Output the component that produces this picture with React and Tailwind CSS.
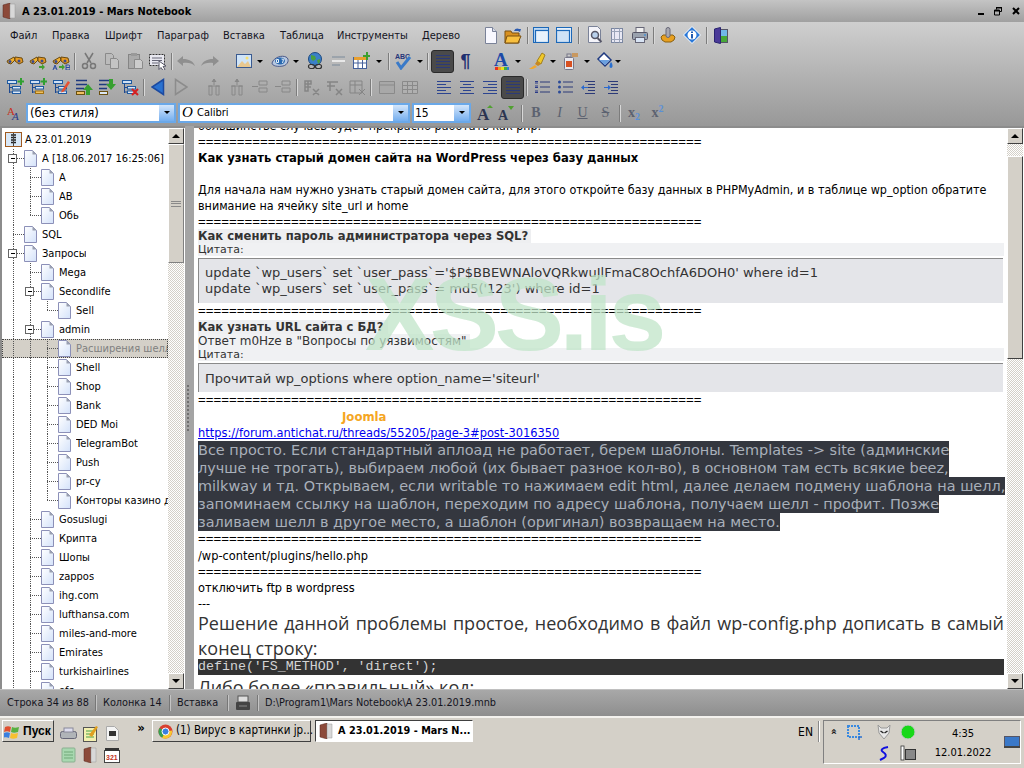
import React from 'react';

const Svg = ({ w = 18, h = 18, children }) => (
  <svg width={w} height={h} viewBox={`0 0 ${w} ${h}`} className="shrink-0">{children}</svg>
);

// toolbar cell
const T = ({ c = 'w-[23px]', children }) => (
  <div className={`${c} h-full flex items-center justify-center shrink-0`}>{children}</div>
);
const Sep = ({ c = '' }) => (
  <div className={`w-[5px] h-full flex items-center justify-center shrink-0 ${c}`}>
    <div className="w-[1px] h-[17px] bg-[#7c7c7c] border-r border-[#d8d8d8] box-content" />
  </div>
);
const Arrow = ({ c = 'w-[10px]' }) => (
  <div className={`${c} h-full flex items-center justify-center shrink-0`}>
    <div className="w-0 h-0 border-l-[3px] border-r-[3px] border-t-[3px] border-l-transparent border-r-transparent border-t-black" />
  </div>
);

const Binoc = ({ extra }) => (
  <Svg>
    <path d="M1 9l7-4 1 3-4 4-3-1z" fill="#f0b030" stroke="#6b4a10" />
    <path d="M9 5l7 1 1 4-4 2-4-3z" fill="#e89a20" stroke="#6b4a10" />
    <circle cx="4" cy="9.500" r="1.500" fill="#3a4a90" />
    <circle cx="13" cy="9" r="1.500" fill="#3a4a90" />
    {extra === 'next' && <path d="M10 14h3v-2l3 3-3 3v-2h-3z" fill="#42a030" />}
    {extra === 'ab' && <path d="M7 14h3v-2l3 3-3 3v-2H7z" fill="#42a030" />}
    {extra === 'ab' && <path d="M1 18l2-5 2 5M2 16h2M14 13h2.500a1.200 1.200 0 010 2.500H14zM14 15.500h3a1.200 1.200 0 010 2.500h-3z" fill="none" stroke="#2a4aa0" />}
  </Svg>
);
const Scissors = () => (
  <Svg>
    <path d="M5 1l6 10M13 1L7 11" stroke="#777" strokeWidth="1.500" fill="none" />
    <circle cx="5" cy="14" r="2.500" fill="none" stroke="#777" strokeWidth="1.500" />
    <circle cx="13" cy="14" r="2.500" fill="none" stroke="#777" strokeWidth="1.500" />
  </Svg>
);
const Copy = () => (
  <Svg>
    <path d="M2.500 1.500h6l2 2v9h-8z" fill="#bbb" stroke="#8a8a8a" />
    <path d="M7.500 6.500h6l2 2v8h-8z" fill="#c4c4c4" stroke="#8a8a8a" />
  </Svg>
);
const Paste = () => (
  <Svg>
    <rect x="2.500" y="2.500" width="11" height="14" fill="#aaa" stroke="#858585" />
    <rect x="5" y="1" width="6" height="3" fill="#999" />
    <path d="M8.500 7.500h6l2 2v7h-8z" fill="#ccc" stroke="#8a8a8a" />
  </Svg>
);
const SelectAll = () => (
  <Svg w={20}>
    <rect x="1.500" y="2.500" width="15" height="11" fill="#e8e8f0" stroke="#333" strokeDasharray="2 1" />
    <path d="M4 6h10M4 8.500h10M4 11h6" stroke="#667" />
    <path d="M11 9l7 5-3 .5 2 3-2 1-2-3-2 2z" fill="#fff" stroke="#556" />
  </Svg>
);
const Undo = ({ flip }) => (
  <svg width="20" height="12" viewBox="0 0 20 12" className={`shrink-0 ${flip ? '-scale-x-100' : ''}`}>
    <path d="M1 6l6-5v3c6 0 10 2 12 7-3-3-7-3.500-12-3v3z" fill="#8f8f8f" />
  </svg>
);
const Picture = () => (
  <Svg>
    <rect x="1.500" y="2.500" width="15" height="13" fill="#cfe4f8" stroke="#3a5a90" />
    <path d="M2 15l5-6 3 3 3-3 3 6z" fill="#e8c890" />
    <circle cx="12" cy="6" r="1.500" fill="#f8e070" />
  </Svg>
);
const Eye = () => (
  <svg width="18" height="12" viewBox="0 0 18 12" className="shrink-0">
    <path d="M1 8c2-6 10-8 14-6s2 8-3 9S1 11 1 8z" fill="#b8c8e0" stroke="#4a5a8a" />
    <ellipse cx="9" cy="6" rx="5" ry="3.500" fill="#2a6ab0" />
    <path d="M5.500 4.500h2v3h-2zM10.500 4l2 .5-1 3.500" fill="none" stroke="#e8f0f8" />
  </svg>
);
const GlobeLink = () => (
  <Svg>
    <circle cx="9" cy="7" r="6.500" fill="#3a80c8" stroke="#1f4a80" />
    <path d="M5 3l4 1 1 3-3 2-2-2zM11 8l3-1 0 3-2 2z" fill="#4aa040" />
    <rect x="2.500" y="12.500" width="6" height="4" rx="2" fill="none" stroke="#333" strokeWidth="1.200" />
    <rect x="9.500" y="12.500" width="6" height="4" rx="2" fill="none" stroke="#333" strokeWidth="1.200" />
  </Svg>
);
const HLine = () => (
  <Svg>
    <path d="M3 5h13M3 13h8" stroke="#7a8a9a" />
    <path d="M3 9h13" stroke="#e8e8e8" strokeWidth="2" />
  </Svg>
);
const TableAdd = () => (
  <Svg>
    <rect x="1.500" y="5.500" width="13" height="11" fill="#fff" stroke="#44609a" />
    <rect x="2" y="5" width="12" height="3" fill="#e8a030" />
    <path d="M1.500 11h13M6 8v8M10.500 8v8" stroke="#44609a" />
    <path d="M11 3h3V0h2v3h2v2h-2v3h-2V5h-3z" fill="#3ca030" />
  </Svg>
);
const Spell = () => (
  <svg width="20" height="18" viewBox="0 0 20 18" className="shrink-0">
    <text x="1" y="7" fontSize="7" fontWeight="700" fill="#26357a" fontFamily="Liberation Sans, sans-serif">ABC</text>
    <path d="M3 10l4 6 9-11" stroke="#3a7ac8" strokeWidth="3" fill="none" />
  </svg>
);
const Lines = () => (
  <Svg w={16} h={14}>
    <path d="M1 1.500h14M1 4.500h14M1 7.500h14M1 10.500h14M1 13.500h14" stroke="#2b3a78" />
  </Svg>
);
const DarkBtn = ({ children, c = '' }) => (
  <div className={`w-[23px] h-[23px] rounded-[3px] bg-[#4a4a4a] border border-[#2a2a2a] flex items-center justify-center shrink-0 ${c}`}>
    {children}
  </div>
);
const Pilcrow = () => <span className="font-['Liberation_Sans',sans-serif] font-bold text-[18px] leading-none text-[#1f2f70]">¶</span>;
const BigA = () => (
  <Svg w={18} h={20}>
    <text x="1" y="15" fontSize="19" fontWeight="700" fill="#1c4aa8" fontFamily="Liberation Serif, serif">A</text>
    <path d="M2 16h3v3H2z" fill="#e83020" /><path d="M5 16h3v3H5z" fill="#f0a020" /><path d="M8 16h3v3H8z" fill="#e8e020" /><path d="M11 16h3v3h-3z" fill="#40b040" /><path d="M14 16h2v3h-2z" fill="#3080d0" />
  </Svg>
);
const Marker = () => (
  <Svg w={18} h={18}>
    <path d="M9 9l5-8 3 2-4 9z" fill="#f0c828" stroke="#a08020" />
    <path d="M9 9l4 3-3 2-3-2z" fill="#c88820" />
    <path d="M1 17l6-4 2 2-4 2z" fill="#f0a830" />
  </Svg>
);
const Spray = () => (
  <Svg>
    <path d="M11 1h6v4h-6z" fill="#c89860" />
    <rect x="6" y="2" width="4" height="3" fill="#ccc" stroke="#778" />
    <rect x="3.500" y="5.500" width="9" height="12" rx="1" fill="#e8e8ee" stroke="#778" />
    <rect x="5" y="9" width="6" height="6" fill="#d85020" />
  </Svg>
);
const Bucket = () => (
  <Svg>
    <path d="M8 1l7 7-6 6-7-7z" fill="#fff" stroke="#1f3a80" strokeWidth="1.500" />
    <path d="M3 8h11l-5 5z" fill="#6aa0e0" />
    <path d="M15 10c2 2 2 6 0 6s-2-3 0-6z" fill="#2a70d0" />
  </Svg>
);
const NewDoc = () => (
  <Svg w={14} h={17}>
    <path d="M1.500.500h7l4 4v12h-11z" fill="#f8f8ff" stroke="#7a8298" />
    <path d="M8.500.500v4h4" fill="#d8dce8" stroke="#7a8298" />
  </Svg>
);
const OpenFolder = () => (
  <Svg w={18} h={17}>
    <path d="M1 4h6l1 2h7v10H1z" fill="#d89020" stroke="#7a5010" />
    <path d="M3 9h14l-3 7H1z" fill="#f8c040" stroke="#7a5010" />
    <path d="M10 4c1-3 4-3 5-2l2 0-1 3-2-1" fill="#2a5ab0" />
  </Svg>
);
const Windows = ({ flip }) => (
  <svg width="16" height="16" viewBox="0 0 16 16" className="shrink-0">
    <rect x=".500" y=".500" width="15" height="15" fill={flip ? '#e8f2fc' : '#bcd8f4'} stroke="#1c68b8" />
    <rect x={flip ? 0.500 : 2.500} y="3.500" width="13" height="12" fill={flip ? '#cfe2f6' : '#e8f2fc'} stroke="#1c68b8" strokeWidth="1.200" />
  </svg>
);
const Preview = () => (
  <Svg w={16} h={18}>
    <path d="M1.500.500h9l3 3v13h-12z" fill="#f4f4fa" stroke="#7a8298" />
    <circle cx="8" cy="9" r="3.500" fill="#b8d0ec" stroke="#556" strokeWidth="1.500" />
    <path d="M10.500 12l4 4" stroke="#556" strokeWidth="2" />
  </Svg>
);
const PageSetup = () => (
  <Svg w={14} h={17}>
    <rect x="1.500" y="1.500" width="11" height="14" fill="#e8e8f4" stroke="#7a86a0" />
    <path d="M1.500 4.500h11M1.500 12.500h11M4.500 1.500v14M9.500 1.500v14" stroke="#9aa4b8" />
  </Svg>
);
const Printer = () => (
  <Svg>
    <rect x="5" y="1.500" width="8" height="5" fill="#f0f0f0" stroke="#667" />
    <rect x="1.500" y="6.500" width="15" height="7" rx="1" fill="#9aa2ae" stroke="#556" />
    <rect x="4.500" y="11.500" width="9" height="5" fill="#d8e4f4" stroke="#667" />
    <circle cx="14" cy="9" r="1" fill="#4a90d0" />
  </Svg>
);
const Gear = () => (
  <Svg>
    <path d="M2 11l2-2h10l2 2-1 3-3 2H6l-3-2z" fill="#e8a020" stroke="#8a6010" />
    <rect x="7" y="1.500" width="4" height="10" rx="2" fill="#a8a8b0" stroke="#667" />
  </Svg>
);
const Info = () => (
  <Svg>
    <path d="M9 .500L17.500 9 9 17.500.500 9z" fill="#2a78d8" stroke="#fff" />
    <circle cx="9" cy="9" r="4.500" fill="#fff" />
    <path d="M8 5.500h2v1.500H8zM8 8h2v4.500H8z" fill="#1f5ab0" />
  </Svg>
);
const Exit = () => (
  <Svg w={14} h={17}>
    <rect x="4.500" y="2.500" width="9" height="13" fill="#fff" stroke="#556" />
    <rect x="5" y="3" width="8" height="6" fill="#70b8e8" />
    <rect x="5" y="9" width="8" height="6" fill="#48a838" />
    <path d="M.500 2l6-1.500v16L.500 15z" fill="#4a3a98" stroke="#2a2470" />
  </Svg>
);
const TreeOp = ({ kind }) => (
  <Svg>
    <rect x="1.500" y="2.500" width="9" height="3" fill="#cfe0f4" stroke="#1f5aa0" />
    <path d="M3.500 6v9M3.500 9.500H6M3.500 14H6" stroke="#1f4a90" fill="none" />
    <rect x="6.500" y="8.500" width="8" height="2.500" fill="#dce8f6" stroke="#1f5aa0" />
    <rect x="6.500" y="13" width="8" height="2.500" fill={kind === 'sub' ? '#f0c060' : '#dce8f6'} stroke={kind === 'sub' ? '#a07010' : '#1f5aa0'} />
    {(kind === 'add' || kind === 'sub') && <path d="M11.500 2.500h2.500V0h2v2.500h2v2h-2V7h-2V4.500h-2.500z" fill="#30a030" />}
    {kind === 'edit' && <path d="M10 12l6-9 2 1.500-6 9-3 1z" fill="#e85030" />}
    {kind === 'del' && <path d="M11 11l6 6M17 11l-6 6" stroke="#d82020" strokeWidth="2" />}
  </Svg>
);
const Move = ({ down }) => (
  <Svg>
    <path d="M1 2.500h11M1 6.500h11M1 10.500h8" stroke="#1f3a80" strokeWidth="1.500" />
    <rect x="1.500" y="13.500" width="8" height="3" fill={down ? '#dce8f6' : '#f0c060'} stroke="#6a5010" />
    {down
      ? <path d="M11 1h4v5h3l-5 6-5-6h3z" fill="#38a030" />
      : <path d="M13 6l5 6h-3v5h-4v-5H8z" fill="#38a030" />}
  </Svg>
);
const Tri = ({ right, on }) => (
  <svg width="14" height="18" viewBox="0 0 14 18" className="shrink-0">
    {right
      ? <path d="M1.500 1.500L13 9 1.500 16.500z" fill="none" stroke="#8c8c8c" strokeWidth="1.500" />
      : <path d="M12.500 1.500L1 9l11.500 7.500z" fill={on ? '#2a72d0' : 'none'} stroke="#1c4aa0" strokeWidth="1.500" />}
  </svg>
);
// gray disabled table-ish icons
const GrayTbl = ({ kind }) => (
  <Svg>
    {kind === 'cols' && <path d="M4 17V8h3v9zM11 17V8h3v9zM3 8h12" fill="none" stroke="#888" />}
    {kind === 'cols' && <path d="M9 1v6M7 4l2-3 2 3" fill="#888" stroke="#888" />}
    {kind === 'rows' && <path d="M8 3h8v4H8zM8 10h8v4H8zM1 8.500h6" fill="none" stroke="#888" />}
    {kind === 'delc' && <path d="M3 3h3v10H3zM3 3h6v3H3zM3 9h6M11 11l6 6M17 11l-6 6" fill="none" stroke="#858585" strokeWidth="1.500" />}
    {kind === 'delr' && <path d="M2 4h11M2 8h8M5 4v9M11 11l6 6M17 11l-6 6" fill="none" stroke="#858585" strokeWidth="1.500" />}
    {kind === 'delt' && <path d="M2 3h12v12H2zM2 7h12M7 3v12M11 11l6 6M17 11l-6 6" fill="none" stroke="#858585" />}
    {kind === 'merge' && <path d="M1.500 3.500h15v12h-15zM1.500 7h15" fill="#a8a8a8" stroke="#8a8a8a" />}
    {kind === 'split' && <path d="M1.500 3.500h15v12h-15zM1.500 7.500h15M1.500 11.500h15M6.500 3.500v12M11.500 3.500v12" fill="#b0b0b0" stroke="#8a8a8a" />}
  </Svg>
);
const Align = ({ kind }) => {
  const s = { l: ['M1 1.500h14', 'M1 4.500h9', 'M1 7.500h14', 'M1 10.500h9', 'M1 13.500h14'], c: ['M1 1.500h14', 'M4 4.500h8', 'M1 7.500h14', 'M4 10.500h8', 'M1 13.500h14'], r: ['M1 1.500h14', 'M6 4.500h9', 'M1 7.500h14', 'M6 10.500h9', 'M1 13.500h14'] }[kind];
  return <Svg w={16} h={15}><path d={s.join('')} stroke="#2c4490" /></Svg>;
};
const NumList = () => (
  <Svg w={16} h={14}>
    <path d="M1 1.500h3M1 3h3M1 6h3M1 7.500h3M1 11h3M1 12.500h3" stroke="#2a3a88" />
    <path d="M6 2h10M6 7h10M6 12h10" stroke="#2c3a78" />
  </Svg>
);
const BulList = () => (
  <Svg w={16} h={14}>
    <circle cx="2.500" cy="2" r="1.500" fill="#2a4a98" /><circle cx="2.500" cy="7" r="1.500" fill="#2a4a98" /><circle cx="2.500" cy="12" r="1.500" fill="#2a4a98" />
    <path d="M6 2h10M6 7h10M6 12h10" stroke="#2c3a78" />
  </Svg>
);
const Indent = ({ right }) => (
  <Svg w={16} h={16}>
    <path d="M5 2.500h10M8 5.500h7M8 8.500h7M8 11.500h7M5 14.500h10" stroke="#2c3a78" />
    {right
      ? <path d="M1 8h4V6l3 2.500L5 11V9H1z" fill="#2a6ad0" />
      : <path d="M8 8H4V6L1 8.500 4 11V9h4z" fill="#2a6ad0" />}
  </Svg>
);
const StyleIco = () => (
  <Svg>
    <text x="1" y="11" fontSize="11" fill="#c83020" fontFamily="Liberation Serif, serif">A</text>
    <text x="6" y="16" fontSize="11" fontStyle="italic" fill="#2a3a88" fontFamily="Liberation Serif, serif">A</text>
  </Svg>
);
const GrowA = ({ small }) => (
  <Svg>
    <text x="1" y="16" fontSize={small ? 14 : 17} fontWeight="700" fill="#2c3450" fontFamily="Liberation Serif, serif">A</text>
    {small
      ? <path d="M11 2h6l-3 4z" fill="#50a030" />
      : <path d="M14 1l3 3h-6z" fill="#50a030" />}
  </Svg>
);
const Fmt = ({ c, children }) => <span className={`font-['Liberation_Serif',serif] text-[14px] leading-none text-[#5c6270] ${c}`}>{children}</span>;

const Combo = ({ c, children }) => (
  <div className={`${c} h-[20px] -mt-[1px] flex items-stretch border-2 border-[#6aa8e8] bg-white shrink-0`}>
    <div className="flex-1 flex items-center min-w-0 overflow-hidden">{children}</div>
    <div className="w-[15px] bg-linear-to-b from-[#d4e6fa] to-[#74aeee] flex items-center justify-center">
      <div className="w-0 h-0 border-l-[3px] border-r-[3px] border-t-[3px] border-l-transparent border-r-transparent border-t-black" />
    </div>
  </div>
);

const MENU = [
  ['Файл', 'w-[42px]'], ['Правка', 'w-[53px]'], ['Шрифт', 'w-[52px]'], ['Параграф', 'w-[66px]'],
  ['Вставка', 'w-[57px]'], ['Таблица', 'w-[57px]'], ['Инструменты', 'w-[85px]'], ['Дерево', 'w-[60px]'],
];

const Toolbars = () => (
  <div className="h-[104px] bg-linear-to-b from-[#cfcfcf] to-[#989898] shrink-0">
    <div className="h-[26px] flex items-center pl-[10px]">
      {MENU.map(([m, w]) => <div key={m} className={`${w} shrink-0 text-[#14141e]`}>{m}</div>)}
      <T c="w-[23px] -ml-[3px]"><NewDoc /></T>
      <T c="w-[22px]"><OpenFolder /></T>
      <Sep c="ml-[1px]" />
      <T c="w-[22px]"><Windows /></T>
      <T c="w-[24px]"><Windows flip /></T>
      <Sep />
      <T c="w-[23px] ml-[2px]"><Preview /></T>
      <T c="w-[22px]"><PageSetup /></T>
      <T c="w-[23px]"><Printer /></T>
      <Sep />
      <T c="w-[24px]"><Gear /></T>
      <T c="w-[24px]"><Info /></T>
      <Sep />
      <T c="w-[24px]"><Exit /></T>
    </div>
    <div className="h-[26px] flex items-center pl-[3px]">
      <T><Binoc /></T>
      <T><Binoc extra="next" /></T>
      <T><Binoc extra="ab" /></T>
      <Sep />
      <T><Scissors /></T><T><Copy /></T><T><Paste /></T><T><SelectAll /></T>
      <Sep />
      <T c="w-[24px]"><Undo /></T><T><Undo flip /></T>
      <T c="w-[23px] ml-[11px]"><Picture /></T><Arrow />
      <T c="w-[23px] ml-[3px]"><Eye /></T><Arrow />
      <T c="w-[23px] ml-[2px]"><GlobeLink /></T>
      <T c="w-[24px]"><HLine /></T>
      <T c="w-[22px]"><TableAdd /></T><Arrow c="w-[14px]" />
      <Sep />
      <T c="w-[22px] ml-[2px]"><Spell /></T><Arrow />
      <Sep />
      <DarkBtn c="ml-[1px]"><Lines /></DarkBtn>
      <T><Pilcrow /></T>
      <T c="w-[23px] ml-[13px]"><BigA /></T><Arrow />
      <T c="w-[23px] ml-[2px]"><Marker /></T><Arrow />
      <T c="w-[23px]"><Spray /></T><Arrow c="w-[10px] ml-[1px]" />
      <T c="w-[22px] ml-[2px]"><Bucket /></T><Arrow c="w-[3px]" />
    </div>
    <div className="h-[26px] flex items-center pl-[3px]">
      <T><TreeOp kind="add" /></T>
      <T><TreeOp kind="sub" /></T>
      <T><TreeOp kind="edit" /></T>
      <T><Move /></T>
      <T><Move down /></T>
      <T><TreeOp kind="del" /></T>
      <Sep />
      <T><Tri on /></T><T><Tri right /></T>
      <T c="w-[23px] ml-[10px]"><GrayTbl kind="cols" /></T>
      <T><GrayTbl kind="cols" /></T>
      <T><GrayTbl kind="rows" /></T>
      <T><GrayTbl kind="rows" /></T>
      <Sep />
      <T><GrayTbl kind="delc" /></T><T><GrayTbl kind="delr" /></T><T><GrayTbl kind="delt" /></T>
      <Sep />
      <T c="w-[23px] ml-[2px]"><GrayTbl kind="merge" /></T><T><GrayTbl kind="split" /></T>
      <T c="w-[23px] ml-[11px]"><Align kind="l" /></T><T><Align kind="c" /></T><T><Align kind="r" /></T>
      <DarkBtn><Lines /></DarkBtn>
      <Sep />
      <T c="w-[22px] ml-[2px]"><NumList /></T><T><BulList /></T><T c="w-[22px] ml-[1px]"><Indent /></T><T c="w-[22px] ml-[1px]"><Indent right /></T>
    </div>
    <div className="h-[26px] flex items-center pl-[3px]">
      <T><StyleIco /></T>
      <Combo c="w-[150px]"><span className="pl-[2px] text-[13px] text-black">(без стиля)</span></Combo>
      <Combo c="w-[232px] ml-[2px]">
        <span className="pl-[2px] w-[17px] font-['Liberation_Serif',serif] italic text-[15px] leading-none text-black">O</span>
        <span className="text-[11px] text-black">Calibri</span>
      </Combo>
      <Combo c="w-[59px] ml-[2px]"><span className="pl-[1px] text-[12px] text-black">15</span></Combo>
      <T c="w-[23px] ml-[2px]"><GrowA /></T>
      <T c="w-[20px]"><GrowA small /></T>
      <Sep c="ml-[3px]" />
      <T c="w-[24px]"><Fmt c="font-bold">B</Fmt></T>
      <T><Fmt c="italic">I</Fmt></T>
      <T><Fmt c="underline">U</Fmt></T>
      <T><Fmt c="line-through">S</Fmt></T>
      <Sep />
      <T c="w-[24px]"><Fmt c="font-bold">x<sub className="text-[#5a90d8] text-[10px]">2</sub></Fmt></T>
      <T><Fmt c="font-bold">x<sup className="text-[#5a90d8] text-[10px]">2</sup></Fmt></T>
    </div>
  </div>
);

const R = (label, iconX, guides, elbow, opts = {}) => ({ label, iconX, guides, elbow, ...opts });
const g2 = [13, 30];
const g3 = [13, 30, 47];
const ROWS = [
  R('A [18.06.2017 16:25:06]', 24, [13], 0, { exp: 12 }),
  R('A', 41, g2, 30), R('AB', 41, g2, 30), R('Обь', 41, [13], 30, { end: true }),
  R('SQL', 24, [13], 13),
  R('Запросы', 24, [13], 0, { exp: 12 }),
  R('Mega', 41, g2, 30),
  R('Secondlife', 41, g2, 0, { exp: 29 }),
  R('Sell', 58, g2, 47, { end: true }),
  R('admin', 41, g2, 0, { exp: 29 }),
  R('Расширения шелла', 58, g3, 47, { sel: true }),
  R('Shell', 58, g3, 47), R('Shop', 58, g3, 47), R('Bank', 58, g3, 47), R('DED Moi', 58, g3, 47),
  R('TelegramBot', 58, g3, 47), R('Push', 58, g3, 47), R('pr-cy', 58, g3, 47),
  R('Конторы казино д', 58, g2, 47, { end: true }),
  ...['Gosuslugi', 'Крипта', 'Шопы', 'zappos', 'ihg.com', 'lufthansa.com', 'miles-and-more', 'Emirates', 'turkishairlines', 'ofc'].map((l) => R(l, 41, g2, 30)),
];

const TreeDoc = () => (
  <Svg w={13} h={17}>
    <defs>
      <linearGradient id="pg" x1="0" y1="0" x2="1" y2="1"><stop offset="0" stopColor="#fff" /><stop offset="1" stopColor="#d4e2fa" /></linearGradient>
    </defs>
    <path d="M.500.500h8l4 4v12H.500z" fill="url(#pg)" stroke="#8c90b8" />
    <path d="M8.500.500l4 4h-4z" fill="#9aa0b0" />
  </Svg>
);

const TreeRow = ({ row }) => (
  <div className={`h-[19px] flex items-center shrink-0 ${row.sel ? 'bg-[#d4d0c8] outline-1 outline-dotted outline-[#444] -outline-offset-1' : ''}`}>
    <svg width={row.iconX - 2} height="19" viewBox="2 0 100 19" preserveAspectRatio="xMinYMin slice" className="shrink-0">
      {row.guides.map((x) => <path key={x} d={`M${x + 0.5} 0V19`} stroke="#555" strokeDasharray="1 1" />)}
      {row.end && <path d={`M${row.elbow + 0.5} 0V9.500`} stroke="#555" strokeDasharray="1 1" />}
      {row.elbow > 0 && <path d={`M${row.elbow} 9.500H${row.iconX}`} stroke="#555" strokeDasharray="1 1" />}
      {row.exp && (
        <g>
          <path d={`M${row.exp + 5} 9.500H${row.iconX}`} stroke="#555" strokeDasharray="1 1" />
          <rect x={row.exp - 3.5} y="5.500" width="8" height="8" fill="#fff" stroke="#666" />
          <path d={`M${row.exp - 1} 9.500h4`} stroke="#000" />
        </g>
      )}
    </svg>
    <TreeDoc />
    <span className={`ml-[5px] whitespace-nowrap overflow-hidden ${row.sel ? 'text-[#808080]' : 'text-black'}`}>{row.label}</span>
  </div>
);

const ScrollBtn = ({ up, c = '' }) => (
  <div className={`h-[16px] w-[16px] shrink-0 bg-[#d4d0c8] border-t border-l border-t-white border-l-white border-r border-b border-r-[#404040] border-b-[#404040] flex items-center justify-center ${c}`}>
    <div className={`w-0 h-0 border-l-[4px] border-r-[4px] border-l-transparent border-r-transparent ${up ? 'border-b-[4px] border-b-black' : 'border-t-[4px] border-t-black'}`} />
  </div>
);
const Checker = ({ c }) => (
  <div className={`${c} bg-[repeating-conic-gradient(#d4d0c8_0_25%,#ffffff_0_50%)] bg-[length:2px_2px]`} />
);

const TreePane = () => (
  <div className="w-[185px] h-full flex border-t-2 border-l-2 border-[#8c8c8c] bg-white shrink-0 overflow-hidden">
    <div className="w-[166px] h-full flex flex-col overflow-hidden pt-[2px]">
      <div className="h-[19px] flex items-center shrink-0 pl-[3px]">
        <Svg w={17} h={15}>
          <rect x=".500" y=".500" width="16" height="14" fill="#d8e8f8" stroke="#a05a20" />
          <path d="M6 3h5M6 5.500h5M6 8h5M6 10.500h5" stroke="#222" strokeWidth="1.500" />
          <path d="M8.500 1v13" stroke="#444" />
        </Svg>
        <span className="ml-[3px] text-black">А 23.01.2019</span>
      </div>
      {ROWS.map((r, i) => <TreeRow key={i} row={r} />)}
    </div>
    <div className="w-[17px] h-full flex flex-col shrink-0">
      <ScrollBtn up />
      <div className="h-[119px] w-[16px] shrink-0 bg-[#d4d0c8] border-t border-l border-t-white border-l-white border-r border-b border-r-[#808080] border-b-[#808080] flex items-center justify-center">
        <div className="w-[10px] h-[6px] border-y border-[#8a8a8a] [background:linear-gradient(#8a8a8a,#8a8a8a)_center/100%_1px_no-repeat]" />
      </div>
      <Checker c="w-[16px] flex-1" />
      <ScrollBtn />
    </div>
  </div>
);

const EQ = '='.repeat(65);
const Eq = ({ c = 'h-[16px]' }) => (
  <div className={`${c} leading-[16px] shrink-0 whitespace-nowrap text-[13.280px] font-['Liberation_Sans',sans-serif]`}>{EQ}</div>
);
const VER = "font-['DejaVu_Sans',sans-serif]";
const SEG = "font-['Open_Sans',sans-serif]";

const DARK_LINES = [
  'Все просто. Если стандартный аплоад не работает, берем шаблоны. Templates -> site (админские',
  'лучше не трогать), выбираем любой (их бывает разное кол-во), в основном там есть всякие beez,',
  'milkway и тд. Открываем, если writable то нажимаем edit html, далее делаем подмену шаблона на шелл,',
  'запоминаем ссылку на шаблон, переходим по адресу шаблона, получаем шелл - профит. Позже',
  'заливаем шелл в другое место, а шаблон (оригинал) возвращаем на место.',
];

const Editor = () => (
  <div className="flex-1 min-w-0 h-full flex bg-white border-t-2 border-[#8c8c8c] relative overflow-hidden">
    <div className="flex-1 min-w-0 flex flex-col pl-[4px] pr-[2px] text-black text-[12.450px] overflow-hidden">
      <div className="h-[6px] shrink-0 overflow-hidden">
        <div className="-mt-[10px] leading-[16px] whitespace-nowrap">большинстве случаев будет прекрасно работать как php.</div>
      </div>
      <Eq />
      <div className="h-[16px] leading-[16px] font-bold shrink-0 text-[12.900px] whitespace-nowrap">Как узнать старый домен сайта на WordPress через базу данных</div>
      <div className="h-[16px] shrink-0" />
      <div className="h-[16px] leading-[16px] shrink-0 whitespace-nowrap">Для начала нам нужно узнать старый домен сайта, для этого откройте базу данных в PHPMyAdmin, и в таблице wp_option обратите</div>
      <div className="h-[16px] leading-[16px] shrink-0">внимание на ячейку site_url и home</div>
      <Eq c="h-[15px]" />
      <div className="h-[14px] leading-[14px] font-bold shrink-0 text-[#333] text-[12.900px] bg-[#eeeff1] w-[333px] whitespace-nowrap">Как сменить пароль администратора через SQL?</div>
      <div className={`h-[13px] leading-[13px] shrink-0 text-[#333] text-[11px] bg-[#f0f1f3] w-[806px] ${VER}`}>Цитата:</div>
      <div className={`h-[45px] mt-[2px] shrink-0 w-[805px] bg-[#e4e5e9] border-l border-t border-[#8a8a8a] pl-[6px] pt-[6px] text-[13px] leading-[16px] text-[#333] whitespace-nowrap ${VER}`}>
        <div>update `wp_users` set `user_pass`='$P$BBEWNAloVQRkwuJlFmaC8OchfA6DOH0' where id=1</div>
        <div>update `wp_users` set `user_pass`= md5('123') where id=1</div>
      </div>
      <Eq c="h-[17px]" />
      <div className="h-[14px] leading-[14px] font-bold shrink-0 text-[#333] text-[12.900px] w-[190px] bg-[#eeeff1] whitespace-nowrap">Как узнать URL сайта с БД?</div>
      <div className={`h-[14px] leading-[14px] shrink-0 text-[#333] text-[12px] bg-[#f0f1f3] w-[272px] whitespace-nowrap ${VER}`}>Ответ m0Hze в "Вопросы по уязвимостям"</div>
      <div className={`h-[13px] leading-[13px] shrink-0 text-[#333] text-[11px] bg-[#f0f1f3] w-[806px] ${VER}`}>Цитата:</div>
      <div className={`h-[29px] mt-[2px] shrink-0 w-[805px] bg-[#e4e5e9] border-l border-t border-[#8a8a8a] pl-[6px] flex items-center text-[13px] text-[#333] ${VER}`}>Прочитай wp_options where option_name='siteurl'</div>
      <Eq c="h-[17px]" />
      <div className="h-[16px] leading-[16px] font-bold shrink-0 text-[#f5a623] text-[13px] pl-[144px]">Joomla</div>
      <div className="h-[16px] leading-[16px] shrink-0 text-[#0000ee] text-[12.700px] underline whitespace-nowrap">https://forum.antichat.ru/threads/55205/page-3#post-3016350</div>
      <div className={`shrink-0 flex flex-col text-[14.450px] leading-[18px] ${VER}`}>
        {DARK_LINES.map((l) => (
          <div key={l} className="h-[18px] w-fit whitespace-nowrap bg-[#34373f] text-[#a9b0ba]">{l}</div>
        ))}
      </div>
      <Eq />
      <div className="h-[17px] leading-[17px] shrink-0 text-[12.700px]">/wp-content/plugins/hello.php</div>
      <Eq />
      <div className="h-[16px] leading-[16px] shrink-0 text-[12.700px]">отключить ftp в wordpress</div>
      <div className="h-[15px] leading-[15px] shrink-0">---</div>
      <div className={`h-[25px] leading-[25px] shrink-0 w-[806px] text-[18px] text-[#333] text-justify [text-align-last:justify] ${SEG}`}>Решение данной проблемы простое, необходимо в файл wp-config.php дописать в самый</div>
      <div className={`h-[23px] leading-[25px] shrink-0 text-[18px] text-[#333] ${SEG}`}>конец строку:</div>
      <div className="h-[16px] leading-[16px] shrink-0 w-[806px] bg-[#333333] text-[#d4d4d4] text-[13.300px] font-['Liberation_Mono',monospace]">define('FS_METHOD', 'direct');</div>
      <div className={`h-[25px] leading-[25px] shrink-0 text-[18px] text-[#333] ${SEG}`}>Либо более «правильный» код:</div>
    </div>
    <div className="w-[17px] h-full flex flex-col shrink-0">
      <ScrollBtn up />
      <Checker c="w-[16px] h-[12px] shrink-0" />
      <div className="h-[203px] w-[16px] shrink-0 bg-[#d4d0c8] border-t border-l border-t-white border-l-white border-r border-b border-r-[#404040] border-b-[#404040]" />
      <Checker c="w-[16px] flex-1" />
      <ScrollBtn />
    </div>
    <div className="absolute left-[171px] top-[134px] text-[104px] leading-none font-bold font-['Liberation_Sans',sans-serif] tracking-[-4.500px] text-[#c0e4c8]/75 pointer-events-none whitespace-nowrap">XSS.is</div>
  </div>
);

const StatusSep = ({ c = 'mx-[6px]' }) => <div className={`w-[1px] h-[16px] bg-[#777] border-r border-[#c4c4c4] box-content shrink-0 ${c}`} />;

const UsbIco = () => (
  <Svg w={16} h={17}>
    <rect x="3" y="1" width="10" height="6" fill="#ddd" stroke="#555" />
    <rect x="1" y="7" width="14" height="8" rx="1" fill="#444" />
    <path d="M4 11h8" stroke="#888" />
  </Svg>
);

const StatusBar = () => (
  <div className="h-[27px] shrink-0 bg-linear-to-b from-[#a8a8a8] to-[#8e8e8e] border-t border-[#c0c0c0] flex items-center pl-[7px] text-[10.800px] text-[#14141e] whitespace-nowrap">
    <span className="w-[82px] shrink-0">Строка 34 из 88</span>
    <StatusSep />
    <span className="w-[60px] shrink-0">Колонка 14</span>
    <StatusSep />
    <span className="w-[44px] shrink-0">Вставка</span>
    <StatusSep />
    <UsbIco />
    <StatusSep c="ml-[6px] mr-[6px]" />
    <span>D:\Program1\Mars Notebook\А 23.01.2019.mnb</span>
  </div>
);

const BookIco = () => (
  <Svg w={14} h={16}>
    <path d="M1 2l7-2v16l-7-2z" fill="#8c4a3a" stroke="#5a2a20" strokeWidth=".5" />
    <path d="M8 1h5v14H8z" fill="#d8d8d8" stroke="#999" strokeWidth=".5" />
  </Svg>
);
const Chrome = () => (
  <Svg w={15} h={15}>
    <circle cx="7.500" cy="7.500" r="7" fill="#d84030" />
    <path d="M7.500 7.500L1.500 4A7 7 0 004.500 14z" fill="#38a050" />
    <path d="M7.500 7.500l6.500-1A7 7 0 014 14z" fill="#f8c830" />
    <circle cx="7.500" cy="7.500" r="3.500" fill="#3a80e0" stroke="#fff" />
  </Svg>
);
const WinFlag = () => (
  <Svg w={17} h={15}>
    <path d="M1 3c2-1 4-1 6 0l-1 5c-2-1-4-1-6 0z" fill="#e05030" />
    <path d="M8 3c2 1 4 1 7 0l-1 5c-3 1-5 1-7 0z" fill="#58b040" />
    <path d="M0 9c2-1 4-1 6 0l-1 5c-2-1-4-1-6 0z" fill="#3a80e0" />
    <path d="M7 9c2 1 4 1 7 0l-1 5c-3 1-5 1-7 0z" fill="#f8c030" />
  </Svg>
);

const Quick = () => (
  <div className="grid grid-cols-3 w-[66px] h-[44px] ml-[3px] mt-[2px] shrink-0 items-center justify-items-center">
    <Svg w={17} h={13}>
      <rect x=".500" y="4.500" width="16" height="7" rx="2" fill="#b0b4b8" stroke="#667" />
      <rect x="4" y="1" width="9" height="4" fill="#dde" stroke="#889" />
    </Svg>
    <Svg w={16} h={17}>
      <rect x="1.500" y="2.500" width="13" height="14" fill="#f4f0b0" stroke="#555" />
      <path d="M4 6h8M4 9h8M4 12h8" stroke="#48a048" />
      <path d="M7 10l7-9 2 1-6 10z" fill="#e0a020" />
    </Svg>
    <Svg w={13} h={15}>
      <path d="M.500.500h8l4 4v10H.500z" fill="#f4f4f4" stroke="#aaa" />
      <rect x="3" y="5" width="7" height="5" fill="#333" />
    </Svg>
    <Svg w={15} h={16}>
      <rect x="1" y="1" width="13" height="14" rx="1" fill="#a8d8b0" stroke="#8ab090" />
      <path d="M3 5h9M3 8h9M3 11h9" stroke="#70a878" />
    </Svg>
    <BookIco />
    <Svg w={16} h={16}>
      <rect x=".500" y="3.500" width="15" height="12" fill="#fff" stroke="#444" />
      <path d="M1 1l14 0 0 3H1z" fill="#333" />
      <text x="2" y="13" fontSize="7" fontWeight="700" fill="#c03020" fontFamily="Liberation Sans, sans-serif">321</text>
    </Svg>
  </div>
);

const Taskbar = () => (
  <div className="h-[52px] shrink-0 bg-[#d4d0c8] border-t-2 border-[#f4f2ee] flex items-start pt-[2px] text-[11.500px] text-black whitespace-nowrap">
    <div className="ml-[2px] w-[52px] h-[22px] shrink-0 bg-[#d4d0c8] border border-t-white border-l-white border-r-[#404040] border-b-[#404040] flex items-center pl-[1px] gap-[2px] font-bold font-['Liberation_Sans',sans-serif] text-[12px]">
      <WinFlag />Пуск
    </div>
    <Quick />
    <div className="w-[16px] ml-[10px] shrink-0 text-[13px] font-bold leading-[16px] text-center">»</div>
    <div className="w-[159px] h-[22px] shrink-0 ml-[3px] border border-t-white border-l-white border-r-[#404040] border-b-[#404040] flex items-center pl-[5px] gap-[3px]">
      <Chrome />(1) Вирус в картинки jp...
    </div>
    <div className="w-[158px] h-[22px] shrink-0 ml-[4px] bg-white border border-t-[#404040] border-l-[#404040] border-r-white border-b-white flex items-center pl-[3px] gap-[5px] font-bold text-[10.800px]">
      <BookIco />А 23.01.2019 - Mars N...
    </div>
    <div className="ml-auto h-[24px] flex items-center text-[12px] mr-[5px]">EN</div>
    <div className="w-[1px] h-[21px] mt-[1px] bg-[#888] border-r border-white box-content mr-[3px] shrink-0" />
    <div className="w-[198px] h-[44px] shrink-0 mr-[3px] border border-t-[#808080] border-l-[#808080] border-r-white border-b-white grid grid-cols-[18px_24px_30px_24px_1fr_22px] grid-rows-2 items-center justify-items-center text-[11px]">
      <div className="text-[11px] font-bold -rotate-90">»</div>
      <Svg w={16} h={16}>
        <rect x="2" y="2" width="11" height="11" fill="none" stroke="#3a8ae0" strokeWidth="2" strokeDasharray="2 1" />
        <path d="M13 13h3M13 13v3" stroke="#2a70d0" strokeWidth="1.500" />
      </Svg>
      <div className="ml-[6px]">
        <Svg w={14} h={16}>
          <path d="M1 1l3 3h6l3-3-1 8-5 6-5-6z" fill="#e8e8e8" stroke="#999" />
          <path d="M3.500 7l3 2M10.500 7l-3 2" stroke="#222" strokeWidth="1.500" />
        </Svg>
      </div>
      <Svg w={16} h={16}>
        <circle cx="8" cy="8" r="7" fill="#18d818" stroke="#c8c8c8" />
        <path d="M11 14l4-3 1 5z" fill="#d4d0c8" />
      </Svg>
      <div className="ml-[8px] mt-[4px]">4:35</div>
      <div className="row-span-2 ml-[6px]">
        <Svg w={16} h={13}>
          <rect x=".500" y=".500" width="15" height="10" fill="#3a78c8" stroke="#556" />
          <rect x="0" y="10" width="16" height="2" fill="#444" />
        </Svg>
      </div>
      <div />
      <div />
      <div className="ml-[6px]">
        <Svg w={12} h={16}>
          <path d="M10 2C4 3 2 5 5 7s4 4 1 6l-4 2" fill="none" stroke="#1010e0" strokeWidth="2" />
        </Svg>
      </div>
      <Svg w={16} h={16}>
        <rect x="5.500" y="4.500" width="10" height="10" fill="#888" stroke="#333" />
        <rect x="1" y="1" width="3" height="14" fill="#fff" stroke="#333" strokeWidth=".8" />
      </Svg>
      <div className="ml-[8px]">12.01.2022</div>
    </div>
  </div>
);

export default function App() {
  return (
    <div className="w-[1024px] h-[768px] flex flex-col overflow-hidden bg-[#d4d0c8] font-['DejaVu_Sans_Condensed','Noto_Sans',sans-serif] text-[11px] leading-none">
      <div className="h-[22px] shrink-0 bg-linear-to-b from-[#c4c4c4] to-[#a0a0a0] flex items-center pl-[2px]">
        <BookIco />
        <span className="ml-[6px] font-bold text-[11px] text-black">А 23.01.2019 - Mars Notebook</span>
        <div className="ml-auto flex items-center gap-[10px] pr-[4px] text-black">
          <Svg w={6} h={10}><path d="M0 7h6v2H0z" fill="#000" /></Svg>
          <Svg w={8} h={9}><path d="M2.500 2.500v-2h5v4h-2M.500 3h5v5h-5z" fill="none" stroke="#000" /><path d="M0 3h6v1.500H0zM2 0h6v1.500H2z" /></Svg>
          <Svg w={8} h={8}><path d="M1 1l6 6M7 1L1 7" stroke="#000" strokeWidth="2" /></Svg>
        </div>
      </div>
      <Toolbars />
      <div className="flex-1 min-h-0 flex">
        <TreePane />
        <div className="w-[9px] h-full shrink-0 bg-[#a4a4a4] flex flex-col items-start pl-[2px] justify-center gap-[2px]">
          {[0, 1, 2, 3, 4, 5, 6, 7, 8, 9, 10, 11].map((i) => <div key={i} className="w-[2px] h-[2px] bg-[#707070]" />)}
        </div>
        <Editor />
      </div>
      <StatusBar />
      <Taskbar />
    </div>
  );
}
